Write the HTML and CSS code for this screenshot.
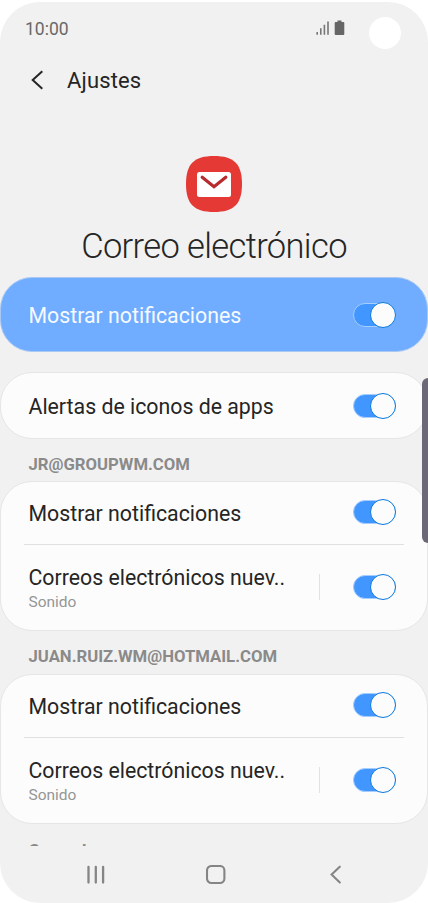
FILE: index.html
```html
<!DOCTYPE html>
<html lang="es">
<head>
    <meta charset="UTF-8">
    <meta name="viewport" content="width=device-width, initial-scale=1.0">
    <title>Ajustes - Correo electrónico</title>
    <link rel="stylesheet" href="styles.css">
</head>
<body>
    <div class="screen">
        <div class="status-bar">
            <span class="clock">10:00</span>
            <svg class="status-icons" width="30" height="16" viewBox="0 0 30 16">
                <path d="M1.2 12v2.8M4.8 8.3v6.5M8.4 4.8v10M12 1.5v13.3" fill="none" stroke="#777" stroke-width="1.6"/>
                <path d="M21.5 .5h4v1.4h1.8q1 0 1 1v11.2q0 1-1 1h-7.6q-1 0-1-1V2.9q0-1 1-1h1.8z" fill="#666"/>
            </svg>
            <span class="camera"></span>
        </div>

        <header class="header">
            <svg width="14" height="20" viewBox="0 0 14 20">
                <path d="M12.3 1.3 2.7 10l9.6 8.7" fill="none" stroke="#252525" stroke-width="2"/>
            </svg>
            <h1>Ajustes</h1>
        </header>

        <main class="content">
            <section class="app">
                <svg width="58" height="58" viewBox="0 0 58 58">
                    <path d="M29 1C49 1 57 9 57 29S49 57 29 57 1 49 1 29 9 1 29 1z" fill="#e53935"/>
                    <rect x="12" y="17" width="34" height="25" rx="2.5" fill="#fff"/>
                    <path d="M17.2 22.2 29 31.7l11.8-9.5" fill="none" stroke="#b72a2d" stroke-width="3.2" stroke-linecap="round"/>
                </svg>
                <h2>Correo electrónico</h2>
            </section>

            <div class="card card-main">
                <div class="row">
                    <span class="row-title">Mostrar notificaciones</span>
                    <span class="switch"></span>
                </div>
            </div>

            <div class="card card-alerts">
                <div class="row">
                    <span class="row-title">Alertas de iconos de apps</span>
                    <span class="switch"></span>
                </div>
            </div>

            <h3 class="label">JR@GROUPWM.COM</h3>
            <div class="card">
                <div class="row row-top">
                    <span class="row-title">Mostrar notificaciones</span>
                    <span class="switch"></span>
                </div>
                <div class="row row-detail">
                    <div class="texts">
                        <span class="row-title">Correos electrónicos nuev..</span>
                        <span class="row-sub">Sonido</span>
                    </div>
                    <span class="separator"></span>
                    <span class="switch"></span>
                </div>
            </div>

            <h3 class="label">JUAN.RUIZ.WM@HOTMAIL.COM</h3>
            <div class="card">
                <div class="row row-top">
                    <span class="row-title">Mostrar notificaciones</span>
                    <span class="switch"></span>
                </div>
                <div class="row row-detail">
                    <div class="texts">
                        <span class="row-title">Correos electrónicos nuev..</span>
                        <span class="row-sub">Sonido</span>
                    </div>
                    <span class="separator"></span>
                    <span class="switch"></span>
                </div>
            </div>

            <h3 class="label label-general">General</h3>
        </main>

        <nav class="nav-bar">
            <svg width="20" height="20" viewBox="0 0 20 20">
                <path d="M2.5 1.8v15.7M9.8 1.8v15.7M17.1 1.8v15.7" fill="none" stroke="#858585" stroke-width="2.3" stroke-linecap="round"/>
            </svg>
            <svg width="20" height="20" viewBox="0 0 20 20">
                <rect x="1" y="1" width="17.4" height="17" rx="4.5" fill="none" stroke="#858585" stroke-width="2.1"/>
            </svg>
            <svg width="20" height="20" viewBox="0 0 20 20">
                <path d="M13.8 1.700 5.600 9.600l8.200 7.900" fill="none" stroke="#858585" stroke-width="2.1" stroke-linecap="round"/>
            </svg>
        </nav>

        <div class="edge-handle"></div>
    </div>
</body>
</html>
```

FILE: styles.css
```css
*,
*::before,
*::after {
    margin: 0;
    padding: 0;
    box-sizing: border-box;
}

body {
    background: #fff;
    font-family: Roboto, sans-serif;
    color: #252525;
    padding-top: 2px;
}

svg {
    display: block;
    flex-shrink: 0;
}

.screen {
    position: relative;
    display: flex;
    flex-direction: column;
    width: 428px;
    height: 901px;
    background: #f1f1f1;
    border-radius: 40px;
    overflow: hidden;
}

/* Status bar */
.status-bar {
    display: flex;
    height: 52px;
    padding: 15px 27px 0 25px;
}

.clock {
    flex: 1;
    font-size: 17.5px;
    line-height: 24px;
    color: #686868;
}

.status-icons {
    margin-top: 3px;
    margin-right: 23px;
}

.camera {
    width: 32px;
    height: 32px;
    background: #fff;
    border-radius: 50%;
}

.header {
    display: flex;
    align-items: center;
    gap: 23px;
    height: 52px;
    padding-left: 30px;
}

h1 {
    font-size: 22px;
    font-weight: 400;
    letter-spacing: 0.15px;
}

.content {
    height: 740px;
    overflow: hidden;
}

/* App icon and name */
.app {
    display: flex;
    flex-direction: column;
    align-items: center;
    height: 171px;
    padding-top: 49px;
}

h2 {
    margin-top: 11px;
    font-size: 34.5px;
    line-height: 44px;
    font-weight: 300;
    letter-spacing: -0.63px;
}

/* Cards */
.card {
    background: #fcfcfc;
    border: 1px solid #e6e6e6;
    border-radius: 32px;
    height: 150px;
}

.card-main {
    height: 75px;
    background: #70acff;
    border-color: #a9c9f3;
    color: #f6faff;
    margin-bottom: 20px;
}

.card-alerts {
    height: 67px;
}

.row {
    display: flex;
    align-items: center;
    height: 100%;
    padding: 0 31px 0 27.5px;
}

.row-title {
    flex: 1;
    padding-top: 2px;
    font-size: 21.3px;
    line-height: 28px;
    white-space: nowrap;
}

.row-top {
    height: 62px;
}

.row-top .switch {
    margin-bottom: 2px;
}

.row-detail {
    position: relative;
    height: 86px;
}

.row-detail::before {
    content: "";
    position: absolute;
    top: 0;
    left: 23px;
    right: 23px;
    height: 1px;
    background: #e0e0e0;
}

.texts {
    flex: 1;
    display: flex;
    flex-direction: column;
}

.row-sub {
    font-size: 15.5px;
    line-height: 20px;
    color: #969696;
}

.separator {
    width: 1px;
    height: 26px;
    margin-right: 33px;
    background: #e2e2e2;
}

.switch {
    position: relative;
    width: 43px;
    height: 24px;
    border: 1px solid #a5ceff;
    border-radius: 12px;
    background: #4296ff;
}

.switch::after {
    content: "";
    position: absolute;
    top: -2px;
    right: -1px;
    width: 26px;
    height: 26px;
    border: 1px solid #0878dc;
    border-radius: 50%;
    background: #fcfcfc;
}

.label {
    height: 42.4px;
    padding: 14px 28.5px 0;
    font-size: 16.7px;
    line-height: 24px;
    font-weight: 700;
    color: #8a8a8a;
}

/* Next section, scrolled half under the navigation buttons */
.label-general {
    padding-top: 15px;
}

/* Navigation buttons */
.nav-bar {
    display: flex;
    gap: 100px;
    height: 57px;
    padding: 19px 0 0 86px;
}

.edge-handle {
    position: absolute;
    top: 376px;
    right: 0;
    width: 6px;
    height: 165px;
    background: #6c6877;
    border-radius: 6px 0 0 6px;
}
```
